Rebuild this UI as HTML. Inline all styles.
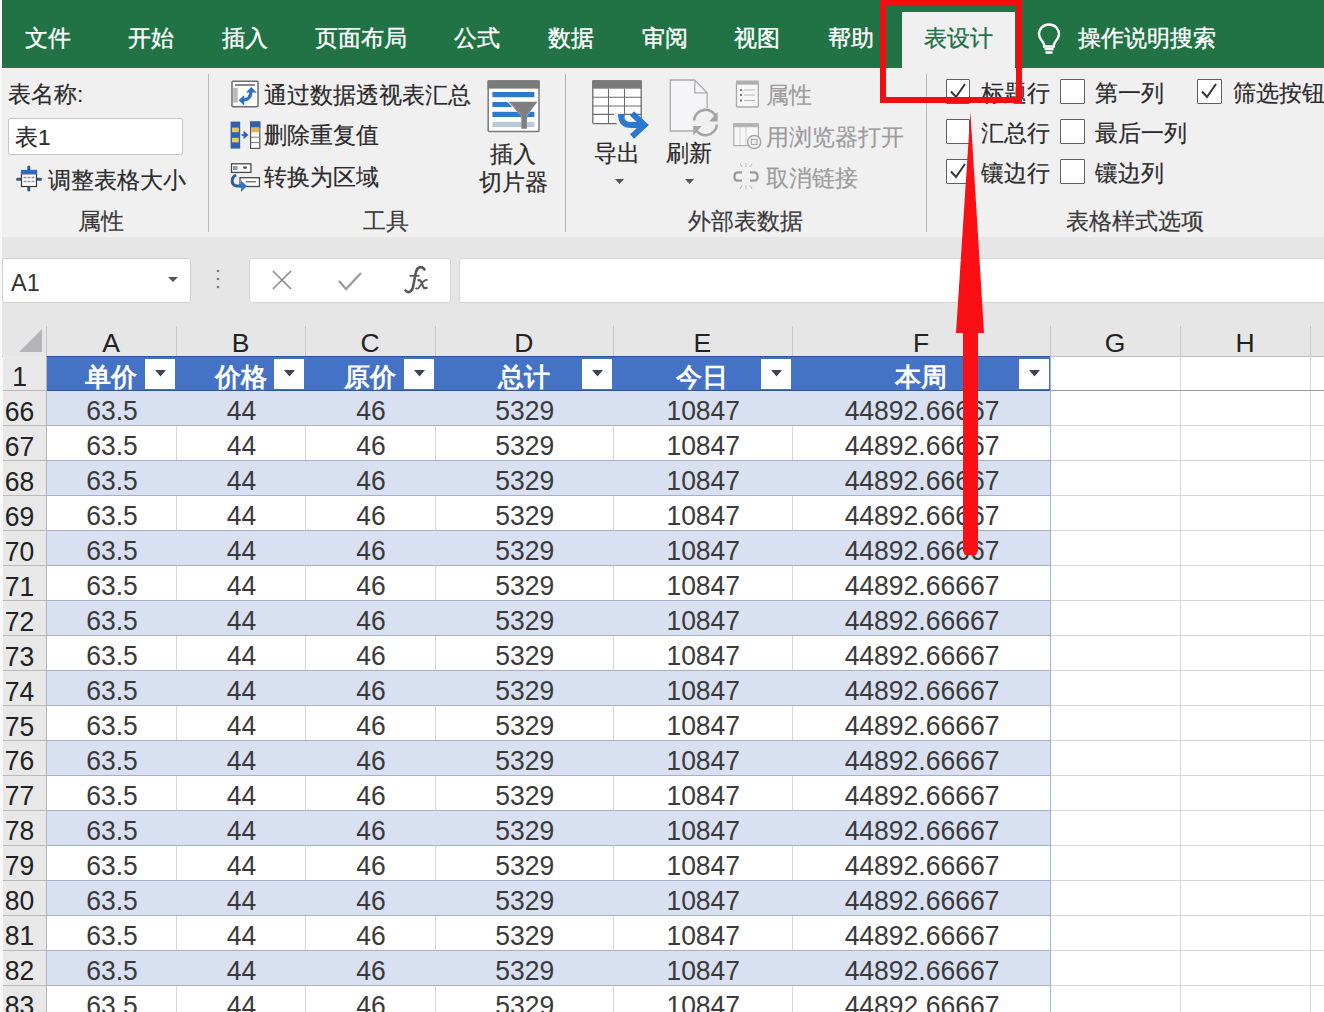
<!DOCTYPE html><html><head><meta charset="utf-8"><style>
*{box-sizing:border-box}
body{margin:0;width:1324px;height:1012px;overflow:hidden;position:relative;background:#fff;font-family:"Liberation Sans",sans-serif;color:#262626}
.a{position:absolute;white-space:nowrap;line-height:1}
.tab{position:absolute;top:27px;font-size:23px;line-height:23px;color:#fff;text-align:center;width:120px;-webkit-text-stroke:0.35px #fff}
.rt{position:absolute;font-size:22.5px;line-height:22px;white-space:nowrap;color:#2b2b2b;margin-top:1px;-webkit-text-stroke:0.2px}
.gl{position:absolute;top:210px;font-size:22.5px;line-height:22px;text-align:center;width:200px;color:#3a3a3a;margin-top:1px;-webkit-text-stroke:0.2px}
.dis{color:#9c9c9c}
.cb{position:absolute;width:24.5px;height:24.5px;border:1.4px solid #606060;border-radius:1px;background:#fff}
.ch{position:absolute;top:0;font-size:26.5px;line-height:30px;text-align:center;color:#222}
.rn{position:absolute;left:2px;width:44px;font-size:26.5px;text-align:center;padding-right:9px;color:#222;background:#e9e9e9;border-bottom:1px solid #c8c8c8}
.sy{display:inline-block;transform:scaleY(1.07);transform-origin:50% 25.5px}
.c{position:absolute;font-size:26.5px;text-align:center;color:#3a3a3a}
</style></head><body>

<div class="a" style="left:0;top:0;width:3px;height:1012px;background:#f9f9f9"></div>
<div class="a" style="left:2px;top:0;width:1322px;height:67.5px;background:#217346"></div>
<div class="a" style="left:902px;top:12px;width:113px;height:56px;background:#f1f0f1"></div>
<div class="tab" style="left:-12px">文件</div>
<div class="tab" style="left:91px">开始</div>
<div class="tab" style="left:185px">插入</div>
<div class="tab" style="left:301px">页面布局</div>
<div class="tab" style="left:417px">公式</div>
<div class="tab" style="left:510.5px">数据</div>
<div class="tab" style="left:604.5px">审阅</div>
<div class="tab" style="left:697px">视图</div>
<div class="tab" style="left:791px">帮助</div>
<div class="tab" style="left:898px;color:#217346;-webkit-text-stroke:0.3px #217346">表设计</div>
<svg class="a" style="left:1036px;top:22px" width="26" height="34" viewBox="0 0 26 34"><path d="M13 2.5C7 2.5 3 7 3 12c0 4 2.5 6.2 4 8.3 1 1.4 1.2 2.6 1.2 4.2h9.6c0-1.6.2-2.8 1.2-4.2 1.5-2.1 4-4.3 4-8.3 0-5-4-9.5-10-9.5z" fill="none" stroke="#fff" stroke-width="2.4"/><path d="M8.5 27h9M9.5 30.5h7" stroke="#fff" stroke-width="2.6"/></svg>
<div class="tab" style="left:1078px;width:auto;text-align:left">操作说明搜索</div>
<div class="a" style="left:2px;top:67.5px;width:1322px;height:169.5px;background:#f1f0f1"></div>
<div class="a" style="left:2px;top:237px;width:1322px;height:89px;background:#e6e6e6"></div>
<div class="a" style="left:208px;top:74px;width:1px;height:158px;background:#b8b8b8"></div>
<div class="a" style="left:565px;top:74px;width:1px;height:158px;background:#b8b8b8"></div>
<div class="a" style="left:926px;top:74px;width:1px;height:158px;background:#b8b8b8"></div>
<div class="rt" style="left:8px;top:83px">表名称:</div>
<div class="a" style="left:8px;top:118px;width:175px;height:37px;background:#fff;border:1px solid #c6c6c6;border-radius:2px"></div>
<div class="rt" style="left:15px;top:126px">表1</div>
<div class="rt" style="left:48px;top:169px">调整表格大小</div>
<div class="gl" style="left:1px">属性</div>
<div class="gl" style="left:286px">工具</div>
<div class="gl" style="left:645px">外部表数据</div>
<div class="gl" style="left:1035px">表格样式选项</div>
<div class="rt" style="left:264px;top:84px">通过数据透视表汇总</div>
<div class="rt" style="left:264px;top:124px">删除重复值</div>
<div class="rt" style="left:264px;top:166px">转换为区域</div>
<div class="rt" style="left:463px;top:143px;width:100px;text-align:center">插入</div>
<div class="rt" style="left:463px;top:171px;width:100px;text-align:center">切片器</div>
<div class="rt" style="left:567px;top:142px;width:100px;text-align:center">导出</div>
<div class="rt" style="left:639px;top:142px;width:100px;text-align:center">刷新</div>
<div class="rt dis" style="left:766px;top:84px">属性</div>
<div class="rt dis" style="left:766px;top:126px">用浏览器打开</div>
<div class="rt dis" style="left:766px;top:167px">取消链接</div>
<div class="cb" style="left:945.5px;top:79px"></div>
<svg class="a" style="left:945.5px;top:79px" width="24" height="24"><path d="M5 12.5l5 5.5 9-13" fill="none" stroke="#333" stroke-width="2"/></svg>
<div class="rt" style="left:980.6px;top:81.5px">标题行</div>
<div class="cb" style="left:1060px;top:79px"></div>
<div class="rt" style="left:1095px;top:81.5px">第一列</div>
<div class="cb" style="left:1197px;top:79px"></div>
<svg class="a" style="left:1197px;top:79px" width="24" height="24"><path d="M5 12.5l5 5.5 9-13" fill="none" stroke="#333" stroke-width="2"/></svg>
<div class="rt" style="left:1233px;top:81.5px">筛选按钮</div>
<div class="cb" style="left:945.5px;top:119px"></div>
<div class="rt" style="left:980.6px;top:121.5px">汇总行</div>
<div class="cb" style="left:1060px;top:119px"></div>
<div class="rt" style="left:1095px;top:121.5px">最后一列</div>
<div class="cb" style="left:945.5px;top:159px"></div>
<svg class="a" style="left:945.5px;top:159px" width="24" height="24"><path d="M5 12.5l5 5.5 9-13" fill="none" stroke="#333" stroke-width="2"/></svg>
<div class="rt" style="left:980.6px;top:161.5px">镶边行</div>
<div class="cb" style="left:1060px;top:159px"></div>
<div class="rt" style="left:1095px;top:161.5px">镶边列</div>
<svg class="a" style="left:14px;top:164px" width="30" height="30" viewBox="14 164 30 30">
<path d="M28.8 167v2.5M28.8 187.5v2.5M17.5 179.2h3M37.5 179.2h3" stroke="#2a5d8f" stroke-width="3" stroke-linecap="round"/>
<rect x="21.5" y="170.5" width="15" height="16" fill="#fff" stroke="#333" stroke-width="1.2"/>
<rect x="21" y="170" width="16" height="4.5" fill="#2d6cc0"/>
<path d="M23.5 177.5h3M27.5 177.5h3M31.5 177.5h3M23.5 181.5h3M27.5 181.5h3M31.5 181.5h3" stroke="#9a8a90" stroke-width="1.3"/>
</svg>
<svg class="a" style="left:229px;top:78px" width="32" height="32" viewBox="229 78 32 32">
<rect x="232" y="81.2" width="26" height="25.6" rx="1" fill="#fff" stroke="#6c6c6c" stroke-width="1.5"/>
<rect x="233.2" y="87.8" width="4.5" height="14.8" fill="#b9b9b9"/>
<path d="M235 85h20" stroke="#555" stroke-width="1.4"/>
<path d="M242.5 100c6.5 0 8.5-3.5 8.5-9" fill="none" stroke="#2f6fc6" stroke-width="3.2"/>
<path d="M251.3 87l-5.3 5.5h10.6z" fill="#2f6fc6"/>
<path d="M238.5 100.2l5.8-5.3v10.6z" fill="#2f6fc6"/>
</svg>
<svg class="a" style="left:229px;top:120px" width="33" height="31" viewBox="229 120 33 31">
<rect x="230.6" y="121.6" width="9.6" height="27" fill="#2c62ae"/>
<rect x="232" y="127.6" width="6.8" height="4.6" fill="#e9c85a"/>
<rect x="232" y="137.8" width="6.8" height="4.6" fill="#e9c85a"/>
<path d="M241.5 135h3" stroke="#2c62ae" stroke-width="1.6"/><path d="M243.5 130.8l5 4.2-5 4.2z" fill="#2c62ae"/>
<rect x="250.6" y="122" width="9.2" height="26.4" fill="#fff" stroke="#555" stroke-width="1.2"/>
<rect x="250" y="121.6" width="10.2" height="6" fill="#2c62ae"/>
<rect x="251.2" y="127.6" width="8" height="4.8" fill="#e2b45a"/>
<path d="M251 137.2h9M251 142.6h9" stroke="#777" stroke-width="1"/>
</svg>
<svg class="a" style="left:229px;top:161px" width="33" height="33" viewBox="229 161 33 33">
<rect x="231.5" y="163.8" width="19.4" height="8.6" fill="#fff" stroke="#4a4a4a" stroke-width="1.3"/>
<rect x="233" y="166" width="4.5" height="4" fill="#8a9ab0"/>
<ellipse cx="245" cy="167.6" rx="2" ry="1.4" fill="#555"/>
<rect x="240" y="177.7" width="19.4" height="8.8" fill="#fff" stroke="#4a4a4a" stroke-width="1.3"/>
<path d="M246 181.8h10" stroke="#666" stroke-width="1.3"/>
<path d="M236 175c-4.5 2-6 10 1 11h5" fill="none" stroke="#2a5d9f" stroke-width="3"/>
<path d="M241 180.5l6 5.5-6 6z" fill="#2e78d2"/>
</svg>
<svg class="a" style="left:485px;top:78px" width="58" height="57" viewBox="485 78 58 57">
<rect x="488.2" y="81" width="50.8" height="50.4" rx="1" fill="#fff" stroke="#7a7a7a" stroke-width="1.5"/>
<rect x="487.5" y="80.3" width="52.2" height="8.3" fill="#7a7a7a"/>
<rect x="492.4" y="92" width="42" height="5.2" fill="#2e79d0"/>
<rect x="492.4" y="102" width="20" height="5" fill="#2e79d0"/>
<rect x="492.4" y="111.8" width="42" height="5.2" fill="#2e79d0"/>
<rect x="492.4" y="122" width="42" height="5.1" fill="#b9c9db"/>
<path d="M506.5 101.2h31.5l-11 14.5v13.5h-5.6v-13.5z" fill="#fff"/>
<path d="M508.5 101.7h29l-10.6 13.8v13.2h-5.6v-13.2z" fill="#7f7f7f"/>
<path d="M511 103l10.5 13" stroke="#b08080" stroke-width="1.2"/>
</svg>
<svg class="a" style="left:590px;top:78px" width="60" height="62" viewBox="590 78 60 62">
<rect x="592.8" y="81" width="48.4" height="42.6" rx="1" fill="#fff" stroke="#6c6c6c" stroke-width="1.3"/>
<rect x="592.2" y="80.2" width="49.6" height="8.5" fill="#7a7a7a"/>
<path d="M608.5 88.7v35M624.5 88.7v35M592.5 97.2h49M592.5 106h49M592.5 114.4h49" stroke="#6c6c6c" stroke-width="1.1"/>
<path d="M619 112.5c0 9 4 13 12 13h8" fill="none" stroke="#f1f0f1" stroke-width="10"/>
<path d="M621 114c0 8 3.5 11 10.5 11h9" fill="none" stroke="#2b78d0" stroke-width="6"/>
<path d="M632 113.5l12.5 11.5-12.5 11.5" fill="none" stroke="#2b78d0" stroke-width="6"/>
</svg>
<svg class="a" style="left:666px;top:76px" width="56" height="62" viewBox="666 76 56 62">
<path d="M670.3 80h24.5l12.3 13v38h-36.8z" fill="#f5f5f7" stroke="#ababab" stroke-width="1.3"/>
<path d="M694.8 80v12.8h12.3" fill="none" stroke="#ababab" stroke-width="1.3"/>
<circle cx="705.5" cy="122.5" r="14.5" fill="#f1f0f1"/>
<path d="M694 120.5a11.5 11.5 0 0 1 22.5 -2.5" fill="none" stroke="#a5a5a5" stroke-width="2.6"/>
<path d="M717 124.5a11.5 11.5 0 0 1 -22.5 2.5" fill="none" stroke="#a5a5a5" stroke-width="2.6"/>
<path d="M717.6 112v9.5h-8.5z" fill="#a5a5a5"/>
<path d="M693.3 135.5v-9.5h8.5z" fill="#a5a5a5"/>
</svg>
<svg class="a" style="left:734px;top:79px" width="27" height="31" viewBox="734 79 27 31">
<rect x="736.5" y="81.4" width="21.8" height="25.6" rx="1" fill="#f7f7f7" stroke="#aaaaaa" stroke-width="1.3"/>
<rect x="736" y="80.7" width="23" height="4" fill="#b0b0b0"/>
<path d="M740 90h2M740 95h2M740 100.5h2" stroke="#777" stroke-width="1.8"/>
<path d="M744 90h11M744 95h11M744 100.5h11" stroke="#b5b5b5" stroke-width="1"/>
</svg>
<svg class="a" style="left:732px;top:121px" width="32" height="31" viewBox="732 121 32 31">
<rect x="733.8" y="123.8" width="24.6" height="21.8" fill="#f7f7f7" stroke="#b0b0b0" stroke-width="1.2"/>
<rect x="733.2" y="123.2" width="25.7" height="4" fill="#b4b4b4"/>
<path d="M740 127v18M746 127v18" stroke="#d0d0d0" stroke-width="1"/>
<circle cx="754.2" cy="142" r="6.6" fill="#f1f0f1" stroke="#a8a8a8" stroke-width="1.5"/>
<rect x="751.4" y="139.4" width="5.6" height="5" fill="none" stroke="#a8a8a8" stroke-width="1.1"/>
</svg>
<svg class="a" style="left:732px;top:162px" width="29" height="28" viewBox="732 162 29 28">
<path d="M742 172.3h-4c-2.6 0-3.6 2-3.6 4.2s1 4.2 3.6 4.2h4" fill="none" stroke="#9a9a9a" stroke-width="2.2"/>
<path d="M750 172.3h4c2.6 0 3.6 2 3.6 4.2s-1 4.2-3.6 4.2h-4" fill="none" stroke="#9a9a9a" stroke-width="2.2"/>
<path d="M740 163.5l2 3.5M746 163v4M752 163.5l-2 3.5M740 189l2-3.5M746 189.5v-4M752 189l-2-3.5" stroke="#b8b8b8" stroke-width="1"/>
</svg>
<svg class="a" style="left:615px;top:179px" width="10" height="6"><path d="M0 0h9L4.5 5z" fill="#555"/></svg>
<svg class="a" style="left:685px;top:179px" width="10" height="6"><path d="M0 0h9L4.5 5z" fill="#555"/></svg>
<div class="a" style="left:2px;top:258px;width:189px;height:45px;background:#fff;border:1px solid #cfcfcf;border-radius:3px"></div>
<div class="a" style="left:11px;top:271.5px;font-size:23.5px;color:#333">A1</div>
<svg class="a" style="left:168px;top:277px" width="10" height="6"><path d="M0 0h10L5 5z" fill="#555"/></svg>
<svg class="a" style="left:216px;top:268px" width="4" height="24"><circle cx="2" cy="3" r="1.3" fill="#777"/><circle cx="2" cy="11" r="1.3" fill="#777"/><circle cx="2" cy="19" r="1.3" fill="#777"/></svg>
<div class="a" style="left:249px;top:258px;width:202px;height:45px;background:#fff;border:1px solid #d6d6d6;border-radius:3px"></div>
<svg class="a" style="left:270px;top:269px" width="24" height="22"><path d="M3 2l18 18M21 2L3 20" stroke="#8a8a8a" stroke-width="1.6"/></svg>
<svg class="a" style="left:337px;top:270px" width="26" height="22"><path d="M2 11l7 8L24 3" fill="none" stroke="#9a9a9a" stroke-width="2.2"/></svg>
<svg class="a" style="left:400px;top:262px" width="32" height="36" viewBox="400 262 32 36"><path d="M424.5 269.5C422 265.5 417 266.5 415.8 272.5L413 287C412 292 408 293.5 405.5 290.5" fill="none" stroke="#585858" stroke-width="2.6" stroke-linecap="round"/><path d="M409.5 275.8H419.5" stroke="#585858" stroke-width="1.8"/><path d="M417.5 280.5C420.5 279 421.5 282 422.5 285C423.5 288 424.5 289 427.5 287.5" fill="none" stroke="#585858" stroke-width="2.2"/><path d="M427.5 280C425 279.5 423.5 281 421.5 284L419 287.5C418 288.8 416.5 288.8 415.5 288" fill="none" stroke="#585858" stroke-width="1.8"/></svg>
<div class="a" style="left:459px;top:258px;width:870px;height:45px;background:#fff;border:1px solid #d6d6d6;border-radius:3px"></div>
<div class="a" style="left:2px;top:326px;width:1322px;height:31px;background:#e6e6e6;border-bottom:1px solid #bdbdbd"></div>
<svg class="a" style="left:16px;top:327px" width="28" height="27"><path d="M26 2V25H3z" fill="#b5b5b7"/></svg>
<div class="a" style="left:46px;top:326px;width:1px;height:30px;background:#c8c8c8"></div>
<div class="ch" style="left:46px;top:328px;width:130px">A</div>
<div class="a" style="left:176px;top:326px;width:1px;height:30px;background:#c8c8c8"></div>
<div class="ch" style="left:176px;top:328px;width:129px">B</div>
<div class="a" style="left:305px;top:326px;width:1px;height:30px;background:#c8c8c8"></div>
<div class="ch" style="left:305px;top:328px;width:130px">C</div>
<div class="a" style="left:435px;top:326px;width:1px;height:30px;background:#c8c8c8"></div>
<div class="ch" style="left:435px;top:328px;width:177.5px">D</div>
<div class="a" style="left:612.5px;top:326px;width:1px;height:30px;background:#c8c8c8"></div>
<div class="ch" style="left:612.5px;top:328px;width:179.5px">E</div>
<div class="a" style="left:792px;top:326px;width:1px;height:30px;background:#c8c8c8"></div>
<div class="ch" style="left:792px;top:328px;width:258px">F</div>
<div class="a" style="left:1050px;top:326px;width:1px;height:30px;background:#c8c8c8"></div>
<div class="ch" style="left:1050px;top:328px;width:130px">G</div>
<div class="a" style="left:1180px;top:326px;width:1px;height:30px;background:#c8c8c8"></div>
<div class="ch" style="left:1180px;top:328px;width:130px">H</div>
<div class="a" style="left:1310px;top:326px;width:1px;height:30px;background:#c8c8c8"></div>
<div class="a" style="left:3px;top:356px;width:43px;height:660px;background:#e8e8e8"></div>
<div class="a" style="left:46px;top:356px;width:1004px;height:35px;background:#4472c4;border-top:1px solid #2f5597;border-bottom:1px solid #2f5597"></div>
<div class="a" style="left:46px;top:390.95px;width:1004px;height:34.95px;background:#d9e0f1"></div>
<div class="a" style="left:46px;top:425.90px;width:1004px;height:34.95px;background:#fff"></div>
<div class="a" style="left:46px;top:460.85px;width:1004px;height:34.95px;background:#d9e0f1"></div>
<div class="a" style="left:46px;top:495.80px;width:1004px;height:34.95px;background:#fff"></div>
<div class="a" style="left:46px;top:530.75px;width:1004px;height:34.95px;background:#d9e0f1"></div>
<div class="a" style="left:46px;top:565.70px;width:1004px;height:34.95px;background:#fff"></div>
<div class="a" style="left:46px;top:600.65px;width:1004px;height:34.95px;background:#d9e0f1"></div>
<div class="a" style="left:46px;top:635.60px;width:1004px;height:34.95px;background:#fff"></div>
<div class="a" style="left:46px;top:670.55px;width:1004px;height:34.95px;background:#d9e0f1"></div>
<div class="a" style="left:46px;top:705.50px;width:1004px;height:34.95px;background:#fff"></div>
<div class="a" style="left:46px;top:740.45px;width:1004px;height:34.95px;background:#d9e0f1"></div>
<div class="a" style="left:46px;top:775.40px;width:1004px;height:34.95px;background:#fff"></div>
<div class="a" style="left:46px;top:810.35px;width:1004px;height:34.95px;background:#d9e0f1"></div>
<div class="a" style="left:46px;top:845.30px;width:1004px;height:34.95px;background:#fff"></div>
<div class="a" style="left:46px;top:880.25px;width:1004px;height:34.95px;background:#d9e0f1"></div>
<div class="a" style="left:46px;top:915.20px;width:1004px;height:34.95px;background:#fff"></div>
<div class="a" style="left:46px;top:950.15px;width:1004px;height:34.95px;background:#d9e0f1"></div>
<div class="a" style="left:46px;top:985.10px;width:1004px;height:34.95px;background:#fff"></div>
<div class="a" style="left:176px;top:425.90px;width:1px;height:34.95px;background:#d6d6d6"></div>
<div class="a" style="left:305px;top:425.90px;width:1px;height:34.95px;background:#d6d6d6"></div>
<div class="a" style="left:435px;top:425.90px;width:1px;height:34.95px;background:#d6d6d6"></div>
<div class="a" style="left:612.5px;top:425.90px;width:1px;height:34.95px;background:#d6d6d6"></div>
<div class="a" style="left:792px;top:425.90px;width:1px;height:34.95px;background:#d6d6d6"></div>
<div class="a" style="left:176px;top:495.80px;width:1px;height:34.95px;background:#d6d6d6"></div>
<div class="a" style="left:305px;top:495.80px;width:1px;height:34.95px;background:#d6d6d6"></div>
<div class="a" style="left:435px;top:495.80px;width:1px;height:34.95px;background:#d6d6d6"></div>
<div class="a" style="left:612.5px;top:495.80px;width:1px;height:34.95px;background:#d6d6d6"></div>
<div class="a" style="left:792px;top:495.80px;width:1px;height:34.95px;background:#d6d6d6"></div>
<div class="a" style="left:176px;top:565.70px;width:1px;height:34.95px;background:#d6d6d6"></div>
<div class="a" style="left:305px;top:565.70px;width:1px;height:34.95px;background:#d6d6d6"></div>
<div class="a" style="left:435px;top:565.70px;width:1px;height:34.95px;background:#d6d6d6"></div>
<div class="a" style="left:612.5px;top:565.70px;width:1px;height:34.95px;background:#d6d6d6"></div>
<div class="a" style="left:792px;top:565.70px;width:1px;height:34.95px;background:#d6d6d6"></div>
<div class="a" style="left:176px;top:635.60px;width:1px;height:34.95px;background:#d6d6d6"></div>
<div class="a" style="left:305px;top:635.60px;width:1px;height:34.95px;background:#d6d6d6"></div>
<div class="a" style="left:435px;top:635.60px;width:1px;height:34.95px;background:#d6d6d6"></div>
<div class="a" style="left:612.5px;top:635.60px;width:1px;height:34.95px;background:#d6d6d6"></div>
<div class="a" style="left:792px;top:635.60px;width:1px;height:34.95px;background:#d6d6d6"></div>
<div class="a" style="left:176px;top:705.50px;width:1px;height:34.95px;background:#d6d6d6"></div>
<div class="a" style="left:305px;top:705.50px;width:1px;height:34.95px;background:#d6d6d6"></div>
<div class="a" style="left:435px;top:705.50px;width:1px;height:34.95px;background:#d6d6d6"></div>
<div class="a" style="left:612.5px;top:705.50px;width:1px;height:34.95px;background:#d6d6d6"></div>
<div class="a" style="left:792px;top:705.50px;width:1px;height:34.95px;background:#d6d6d6"></div>
<div class="a" style="left:176px;top:775.40px;width:1px;height:34.95px;background:#d6d6d6"></div>
<div class="a" style="left:305px;top:775.40px;width:1px;height:34.95px;background:#d6d6d6"></div>
<div class="a" style="left:435px;top:775.40px;width:1px;height:34.95px;background:#d6d6d6"></div>
<div class="a" style="left:612.5px;top:775.40px;width:1px;height:34.95px;background:#d6d6d6"></div>
<div class="a" style="left:792px;top:775.40px;width:1px;height:34.95px;background:#d6d6d6"></div>
<div class="a" style="left:176px;top:845.30px;width:1px;height:34.95px;background:#d6d6d6"></div>
<div class="a" style="left:305px;top:845.30px;width:1px;height:34.95px;background:#d6d6d6"></div>
<div class="a" style="left:435px;top:845.30px;width:1px;height:34.95px;background:#d6d6d6"></div>
<div class="a" style="left:612.5px;top:845.30px;width:1px;height:34.95px;background:#d6d6d6"></div>
<div class="a" style="left:792px;top:845.30px;width:1px;height:34.95px;background:#d6d6d6"></div>
<div class="a" style="left:176px;top:915.20px;width:1px;height:34.95px;background:#d6d6d6"></div>
<div class="a" style="left:305px;top:915.20px;width:1px;height:34.95px;background:#d6d6d6"></div>
<div class="a" style="left:435px;top:915.20px;width:1px;height:34.95px;background:#d6d6d6"></div>
<div class="a" style="left:612.5px;top:915.20px;width:1px;height:34.95px;background:#d6d6d6"></div>
<div class="a" style="left:792px;top:915.20px;width:1px;height:34.95px;background:#d6d6d6"></div>
<div class="a" style="left:176px;top:985.10px;width:1px;height:34.95px;background:#d6d6d6"></div>
<div class="a" style="left:305px;top:985.10px;width:1px;height:34.95px;background:#d6d6d6"></div>
<div class="a" style="left:435px;top:985.10px;width:1px;height:34.95px;background:#d6d6d6"></div>
<div class="a" style="left:612.5px;top:985.10px;width:1px;height:34.95px;background:#d6d6d6"></div>
<div class="a" style="left:792px;top:985.10px;width:1px;height:34.95px;background:#d6d6d6"></div>
<div class="a" style="left:1180px;top:356px;width:1px;height:660px;background:#d6d6d6"></div>
<div class="a" style="left:1310px;top:356px;width:1px;height:660px;background:#d6d6d6"></div>
<div class="a" style="left:1050px;top:390.45px;width:274px;height:1px;background:#9a9a9a"></div>
<div class="a" style="left:3px;top:390.45px;width:43px;height:1px;background:#b9b9b9"></div>
<div class="a" style="left:46px;top:425.30px;width:1004px;height:1.2px;background:#a3b0c8"></div>
<div class="a" style="left:1050px;top:425.40px;width:274px;height:1px;background:#d6d6d6"></div>
<div class="a" style="left:3px;top:425.40px;width:43px;height:1px;background:#b9b9b9"></div>
<div class="a" style="left:46px;top:460.25px;width:1004px;height:1.2px;background:#a3b0c8"></div>
<div class="a" style="left:1050px;top:460.35px;width:274px;height:1px;background:#d6d6d6"></div>
<div class="a" style="left:3px;top:460.35px;width:43px;height:1px;background:#b9b9b9"></div>
<div class="a" style="left:46px;top:495.20px;width:1004px;height:1.2px;background:#a3b0c8"></div>
<div class="a" style="left:1050px;top:495.30px;width:274px;height:1px;background:#d6d6d6"></div>
<div class="a" style="left:3px;top:495.30px;width:43px;height:1px;background:#b9b9b9"></div>
<div class="a" style="left:46px;top:530.15px;width:1004px;height:1.2px;background:#a3b0c8"></div>
<div class="a" style="left:1050px;top:530.25px;width:274px;height:1px;background:#d6d6d6"></div>
<div class="a" style="left:3px;top:530.25px;width:43px;height:1px;background:#b9b9b9"></div>
<div class="a" style="left:46px;top:565.10px;width:1004px;height:1.2px;background:#a3b0c8"></div>
<div class="a" style="left:1050px;top:565.20px;width:274px;height:1px;background:#d6d6d6"></div>
<div class="a" style="left:3px;top:565.20px;width:43px;height:1px;background:#b9b9b9"></div>
<div class="a" style="left:46px;top:600.05px;width:1004px;height:1.2px;background:#a3b0c8"></div>
<div class="a" style="left:1050px;top:600.15px;width:274px;height:1px;background:#d6d6d6"></div>
<div class="a" style="left:3px;top:600.15px;width:43px;height:1px;background:#b9b9b9"></div>
<div class="a" style="left:46px;top:635.00px;width:1004px;height:1.2px;background:#a3b0c8"></div>
<div class="a" style="left:1050px;top:635.10px;width:274px;height:1px;background:#d6d6d6"></div>
<div class="a" style="left:3px;top:635.10px;width:43px;height:1px;background:#b9b9b9"></div>
<div class="a" style="left:46px;top:669.95px;width:1004px;height:1.2px;background:#a3b0c8"></div>
<div class="a" style="left:1050px;top:670.05px;width:274px;height:1px;background:#d6d6d6"></div>
<div class="a" style="left:3px;top:670.05px;width:43px;height:1px;background:#b9b9b9"></div>
<div class="a" style="left:46px;top:704.90px;width:1004px;height:1.2px;background:#a3b0c8"></div>
<div class="a" style="left:1050px;top:705.00px;width:274px;height:1px;background:#d6d6d6"></div>
<div class="a" style="left:3px;top:705.00px;width:43px;height:1px;background:#b9b9b9"></div>
<div class="a" style="left:46px;top:739.85px;width:1004px;height:1.2px;background:#a3b0c8"></div>
<div class="a" style="left:1050px;top:739.95px;width:274px;height:1px;background:#d6d6d6"></div>
<div class="a" style="left:3px;top:739.95px;width:43px;height:1px;background:#b9b9b9"></div>
<div class="a" style="left:46px;top:774.80px;width:1004px;height:1.2px;background:#a3b0c8"></div>
<div class="a" style="left:1050px;top:774.90px;width:274px;height:1px;background:#d6d6d6"></div>
<div class="a" style="left:3px;top:774.90px;width:43px;height:1px;background:#b9b9b9"></div>
<div class="a" style="left:46px;top:809.75px;width:1004px;height:1.2px;background:#a3b0c8"></div>
<div class="a" style="left:1050px;top:809.85px;width:274px;height:1px;background:#d6d6d6"></div>
<div class="a" style="left:3px;top:809.85px;width:43px;height:1px;background:#b9b9b9"></div>
<div class="a" style="left:46px;top:844.70px;width:1004px;height:1.2px;background:#a3b0c8"></div>
<div class="a" style="left:1050px;top:844.80px;width:274px;height:1px;background:#d6d6d6"></div>
<div class="a" style="left:3px;top:844.80px;width:43px;height:1px;background:#b9b9b9"></div>
<div class="a" style="left:46px;top:879.65px;width:1004px;height:1.2px;background:#a3b0c8"></div>
<div class="a" style="left:1050px;top:879.75px;width:274px;height:1px;background:#d6d6d6"></div>
<div class="a" style="left:3px;top:879.75px;width:43px;height:1px;background:#b9b9b9"></div>
<div class="a" style="left:46px;top:914.60px;width:1004px;height:1.2px;background:#a3b0c8"></div>
<div class="a" style="left:1050px;top:914.70px;width:274px;height:1px;background:#d6d6d6"></div>
<div class="a" style="left:3px;top:914.70px;width:43px;height:1px;background:#b9b9b9"></div>
<div class="a" style="left:46px;top:949.55px;width:1004px;height:1.2px;background:#a3b0c8"></div>
<div class="a" style="left:1050px;top:949.65px;width:274px;height:1px;background:#d6d6d6"></div>
<div class="a" style="left:3px;top:949.65px;width:43px;height:1px;background:#b9b9b9"></div>
<div class="a" style="left:46px;top:984.50px;width:1004px;height:1.2px;background:#a3b0c8"></div>
<div class="a" style="left:1050px;top:984.60px;width:274px;height:1px;background:#d6d6d6"></div>
<div class="a" style="left:3px;top:984.60px;width:43px;height:1px;background:#b9b9b9"></div>
<div class="a" style="left:46px;top:1019.45px;width:1004px;height:1.2px;background:#a3b0c8"></div>
<div class="a" style="left:1050px;top:1019.55px;width:274px;height:1px;background:#d6d6d6"></div>
<div class="a" style="left:3px;top:1019.55px;width:43px;height:1px;background:#b9b9b9"></div>
<div class="a" style="left:45.5px;top:356px;width:1px;height:660px;background:#b4b4b4"></div>
<div class="a" style="left:1049.5px;top:356px;width:1px;height:660px;background:#9fb3dc"></div>
<div class="a" style="left:0;top:360.00px;width:39px;text-align:center;font-size:26.5px;line-height:34.95px;color:#222"><span class="sy">1</span></div>
<div class="a" style="left:0;top:394.95px;width:39px;text-align:center;font-size:26.5px;line-height:34.95px;color:#222"><span class="sy">66</span></div>
<div class="a" style="left:0;top:429.90px;width:39px;text-align:center;font-size:26.5px;line-height:34.95px;color:#222"><span class="sy">67</span></div>
<div class="a" style="left:0;top:464.85px;width:39px;text-align:center;font-size:26.5px;line-height:34.95px;color:#222"><span class="sy">68</span></div>
<div class="a" style="left:0;top:499.80px;width:39px;text-align:center;font-size:26.5px;line-height:34.95px;color:#222"><span class="sy">69</span></div>
<div class="a" style="left:0;top:534.75px;width:39px;text-align:center;font-size:26.5px;line-height:34.95px;color:#222"><span class="sy">70</span></div>
<div class="a" style="left:0;top:569.70px;width:39px;text-align:center;font-size:26.5px;line-height:34.95px;color:#222"><span class="sy">71</span></div>
<div class="a" style="left:0;top:604.65px;width:39px;text-align:center;font-size:26.5px;line-height:34.95px;color:#222"><span class="sy">72</span></div>
<div class="a" style="left:0;top:639.60px;width:39px;text-align:center;font-size:26.5px;line-height:34.95px;color:#222"><span class="sy">73</span></div>
<div class="a" style="left:0;top:674.55px;width:39px;text-align:center;font-size:26.5px;line-height:34.95px;color:#222"><span class="sy">74</span></div>
<div class="a" style="left:0;top:709.50px;width:39px;text-align:center;font-size:26.5px;line-height:34.95px;color:#222"><span class="sy">75</span></div>
<div class="a" style="left:0;top:744.45px;width:39px;text-align:center;font-size:26.5px;line-height:34.95px;color:#222"><span class="sy">76</span></div>
<div class="a" style="left:0;top:779.40px;width:39px;text-align:center;font-size:26.5px;line-height:34.95px;color:#222"><span class="sy">77</span></div>
<div class="a" style="left:0;top:814.35px;width:39px;text-align:center;font-size:26.5px;line-height:34.95px;color:#222"><span class="sy">78</span></div>
<div class="a" style="left:0;top:849.30px;width:39px;text-align:center;font-size:26.5px;line-height:34.95px;color:#222"><span class="sy">79</span></div>
<div class="a" style="left:0;top:884.25px;width:39px;text-align:center;font-size:26.5px;line-height:34.95px;color:#222"><span class="sy">80</span></div>
<div class="a" style="left:0;top:919.20px;width:39px;text-align:center;font-size:26.5px;line-height:34.95px;color:#222"><span class="sy">81</span></div>
<div class="a" style="left:0;top:954.15px;width:39px;text-align:center;font-size:26.5px;line-height:34.95px;color:#222"><span class="sy">82</span></div>
<div class="a" style="left:0;top:989.10px;width:39px;text-align:center;font-size:26.5px;line-height:34.95px;color:#222"><span class="sy">83</span></div>
<div class="a" style="left:46px;top:364px;width:130px;text-align:center;color:#fff;font-weight:bold;font-size:26px;line-height:26px">单价</div>
<div class="a" style="left:145px;top:359px;width:30px;height:30px;background:#fff"></div>
<svg class="a" style="left:155px;top:370px" width="11" height="7"><path d="M0 0h11L5.5 6.5z" fill="#3c4352"/></svg>
<div class="a" style="left:176px;top:364px;width:129px;text-align:center;color:#fff;font-weight:bold;font-size:26px;line-height:26px">价格</div>
<div class="a" style="left:274px;top:359px;width:30px;height:30px;background:#fff"></div>
<svg class="a" style="left:284px;top:370px" width="11" height="7"><path d="M0 0h11L5.5 6.5z" fill="#3c4352"/></svg>
<div class="a" style="left:305px;top:364px;width:130px;text-align:center;color:#fff;font-weight:bold;font-size:26px;line-height:26px">原价</div>
<div class="a" style="left:404px;top:359px;width:30px;height:30px;background:#fff"></div>
<svg class="a" style="left:414px;top:370px" width="11" height="7"><path d="M0 0h11L5.5 6.5z" fill="#3c4352"/></svg>
<div class="a" style="left:435px;top:364px;width:177.5px;text-align:center;color:#fff;font-weight:bold;font-size:26px;line-height:26px">总计</div>
<div class="a" style="left:581.5px;top:359px;width:30px;height:30px;background:#fff"></div>
<svg class="a" style="left:591.5px;top:370px" width="11" height="7"><path d="M0 0h11L5.5 6.5z" fill="#3c4352"/></svg>
<div class="a" style="left:612.5px;top:364px;width:179.5px;text-align:center;color:#fff;font-weight:bold;font-size:26px;line-height:26px">今日</div>
<div class="a" style="left:761px;top:359px;width:30px;height:30px;background:#fff"></div>
<svg class="a" style="left:771px;top:370px" width="11" height="7"><path d="M0 0h11L5.5 6.5z" fill="#3c4352"/></svg>
<div class="a" style="left:792px;top:364px;width:258px;text-align:center;color:#fff;font-weight:bold;font-size:26px;line-height:26px">本周</div>
<div class="a" style="left:1019px;top:359px;width:30px;height:30px;background:#fff"></div>
<svg class="a" style="left:1029px;top:370px" width="11" height="7"><path d="M0 0h11L5.5 6.5z" fill="#3c4352"/></svg>
<div class="c" style="left:47px;top:394.45px;width:130px;line-height:34.95px"><span class="sy">63.5</span></div>
<div class="c" style="left:177px;top:394.45px;width:129px;line-height:34.95px"><span class="sy">44</span></div>
<div class="c" style="left:306px;top:394.45px;width:130px;line-height:34.95px"><span class="sy">46</span></div>
<div class="c" style="left:436px;top:394.45px;width:177.5px;line-height:34.95px"><span class="sy">5329</span></div>
<div class="c" style="left:613.5px;top:394.45px;width:179.5px;line-height:34.95px"><span class="sy">10847</span></div>
<div class="c" style="left:793px;top:394.45px;width:258px;line-height:34.95px"><span class="sy">44892.66667</span></div>
<div class="c" style="left:47px;top:429.40px;width:130px;line-height:34.95px"><span class="sy">63.5</span></div>
<div class="c" style="left:177px;top:429.40px;width:129px;line-height:34.95px"><span class="sy">44</span></div>
<div class="c" style="left:306px;top:429.40px;width:130px;line-height:34.95px"><span class="sy">46</span></div>
<div class="c" style="left:436px;top:429.40px;width:177.5px;line-height:34.95px"><span class="sy">5329</span></div>
<div class="c" style="left:613.5px;top:429.40px;width:179.5px;line-height:34.95px"><span class="sy">10847</span></div>
<div class="c" style="left:793px;top:429.40px;width:258px;line-height:34.95px"><span class="sy">44892.66667</span></div>
<div class="c" style="left:47px;top:464.35px;width:130px;line-height:34.95px"><span class="sy">63.5</span></div>
<div class="c" style="left:177px;top:464.35px;width:129px;line-height:34.95px"><span class="sy">44</span></div>
<div class="c" style="left:306px;top:464.35px;width:130px;line-height:34.95px"><span class="sy">46</span></div>
<div class="c" style="left:436px;top:464.35px;width:177.5px;line-height:34.95px"><span class="sy">5329</span></div>
<div class="c" style="left:613.5px;top:464.35px;width:179.5px;line-height:34.95px"><span class="sy">10847</span></div>
<div class="c" style="left:793px;top:464.35px;width:258px;line-height:34.95px"><span class="sy">44892.66667</span></div>
<div class="c" style="left:47px;top:499.30px;width:130px;line-height:34.95px"><span class="sy">63.5</span></div>
<div class="c" style="left:177px;top:499.30px;width:129px;line-height:34.95px"><span class="sy">44</span></div>
<div class="c" style="left:306px;top:499.30px;width:130px;line-height:34.95px"><span class="sy">46</span></div>
<div class="c" style="left:436px;top:499.30px;width:177.5px;line-height:34.95px"><span class="sy">5329</span></div>
<div class="c" style="left:613.5px;top:499.30px;width:179.5px;line-height:34.95px"><span class="sy">10847</span></div>
<div class="c" style="left:793px;top:499.30px;width:258px;line-height:34.95px"><span class="sy">44892.66667</span></div>
<div class="c" style="left:47px;top:534.25px;width:130px;line-height:34.95px"><span class="sy">63.5</span></div>
<div class="c" style="left:177px;top:534.25px;width:129px;line-height:34.95px"><span class="sy">44</span></div>
<div class="c" style="left:306px;top:534.25px;width:130px;line-height:34.95px"><span class="sy">46</span></div>
<div class="c" style="left:436px;top:534.25px;width:177.5px;line-height:34.95px"><span class="sy">5329</span></div>
<div class="c" style="left:613.5px;top:534.25px;width:179.5px;line-height:34.95px"><span class="sy">10847</span></div>
<div class="c" style="left:793px;top:534.25px;width:258px;line-height:34.95px"><span class="sy">44892.66667</span></div>
<div class="c" style="left:47px;top:569.20px;width:130px;line-height:34.95px"><span class="sy">63.5</span></div>
<div class="c" style="left:177px;top:569.20px;width:129px;line-height:34.95px"><span class="sy">44</span></div>
<div class="c" style="left:306px;top:569.20px;width:130px;line-height:34.95px"><span class="sy">46</span></div>
<div class="c" style="left:436px;top:569.20px;width:177.5px;line-height:34.95px"><span class="sy">5329</span></div>
<div class="c" style="left:613.5px;top:569.20px;width:179.5px;line-height:34.95px"><span class="sy">10847</span></div>
<div class="c" style="left:793px;top:569.20px;width:258px;line-height:34.95px"><span class="sy">44892.66667</span></div>
<div class="c" style="left:47px;top:604.15px;width:130px;line-height:34.95px"><span class="sy">63.5</span></div>
<div class="c" style="left:177px;top:604.15px;width:129px;line-height:34.95px"><span class="sy">44</span></div>
<div class="c" style="left:306px;top:604.15px;width:130px;line-height:34.95px"><span class="sy">46</span></div>
<div class="c" style="left:436px;top:604.15px;width:177.5px;line-height:34.95px"><span class="sy">5329</span></div>
<div class="c" style="left:613.5px;top:604.15px;width:179.5px;line-height:34.95px"><span class="sy">10847</span></div>
<div class="c" style="left:793px;top:604.15px;width:258px;line-height:34.95px"><span class="sy">44892.66667</span></div>
<div class="c" style="left:47px;top:639.10px;width:130px;line-height:34.95px"><span class="sy">63.5</span></div>
<div class="c" style="left:177px;top:639.10px;width:129px;line-height:34.95px"><span class="sy">44</span></div>
<div class="c" style="left:306px;top:639.10px;width:130px;line-height:34.95px"><span class="sy">46</span></div>
<div class="c" style="left:436px;top:639.10px;width:177.5px;line-height:34.95px"><span class="sy">5329</span></div>
<div class="c" style="left:613.5px;top:639.10px;width:179.5px;line-height:34.95px"><span class="sy">10847</span></div>
<div class="c" style="left:793px;top:639.10px;width:258px;line-height:34.95px"><span class="sy">44892.66667</span></div>
<div class="c" style="left:47px;top:674.05px;width:130px;line-height:34.95px"><span class="sy">63.5</span></div>
<div class="c" style="left:177px;top:674.05px;width:129px;line-height:34.95px"><span class="sy">44</span></div>
<div class="c" style="left:306px;top:674.05px;width:130px;line-height:34.95px"><span class="sy">46</span></div>
<div class="c" style="left:436px;top:674.05px;width:177.5px;line-height:34.95px"><span class="sy">5329</span></div>
<div class="c" style="left:613.5px;top:674.05px;width:179.5px;line-height:34.95px"><span class="sy">10847</span></div>
<div class="c" style="left:793px;top:674.05px;width:258px;line-height:34.95px"><span class="sy">44892.66667</span></div>
<div class="c" style="left:47px;top:709.00px;width:130px;line-height:34.95px"><span class="sy">63.5</span></div>
<div class="c" style="left:177px;top:709.00px;width:129px;line-height:34.95px"><span class="sy">44</span></div>
<div class="c" style="left:306px;top:709.00px;width:130px;line-height:34.95px"><span class="sy">46</span></div>
<div class="c" style="left:436px;top:709.00px;width:177.5px;line-height:34.95px"><span class="sy">5329</span></div>
<div class="c" style="left:613.5px;top:709.00px;width:179.5px;line-height:34.95px"><span class="sy">10847</span></div>
<div class="c" style="left:793px;top:709.00px;width:258px;line-height:34.95px"><span class="sy">44892.66667</span></div>
<div class="c" style="left:47px;top:743.95px;width:130px;line-height:34.95px"><span class="sy">63.5</span></div>
<div class="c" style="left:177px;top:743.95px;width:129px;line-height:34.95px"><span class="sy">44</span></div>
<div class="c" style="left:306px;top:743.95px;width:130px;line-height:34.95px"><span class="sy">46</span></div>
<div class="c" style="left:436px;top:743.95px;width:177.5px;line-height:34.95px"><span class="sy">5329</span></div>
<div class="c" style="left:613.5px;top:743.95px;width:179.5px;line-height:34.95px"><span class="sy">10847</span></div>
<div class="c" style="left:793px;top:743.95px;width:258px;line-height:34.95px"><span class="sy">44892.66667</span></div>
<div class="c" style="left:47px;top:778.90px;width:130px;line-height:34.95px"><span class="sy">63.5</span></div>
<div class="c" style="left:177px;top:778.90px;width:129px;line-height:34.95px"><span class="sy">44</span></div>
<div class="c" style="left:306px;top:778.90px;width:130px;line-height:34.95px"><span class="sy">46</span></div>
<div class="c" style="left:436px;top:778.90px;width:177.5px;line-height:34.95px"><span class="sy">5329</span></div>
<div class="c" style="left:613.5px;top:778.90px;width:179.5px;line-height:34.95px"><span class="sy">10847</span></div>
<div class="c" style="left:793px;top:778.90px;width:258px;line-height:34.95px"><span class="sy">44892.66667</span></div>
<div class="c" style="left:47px;top:813.85px;width:130px;line-height:34.95px"><span class="sy">63.5</span></div>
<div class="c" style="left:177px;top:813.85px;width:129px;line-height:34.95px"><span class="sy">44</span></div>
<div class="c" style="left:306px;top:813.85px;width:130px;line-height:34.95px"><span class="sy">46</span></div>
<div class="c" style="left:436px;top:813.85px;width:177.5px;line-height:34.95px"><span class="sy">5329</span></div>
<div class="c" style="left:613.5px;top:813.85px;width:179.5px;line-height:34.95px"><span class="sy">10847</span></div>
<div class="c" style="left:793px;top:813.85px;width:258px;line-height:34.95px"><span class="sy">44892.66667</span></div>
<div class="c" style="left:47px;top:848.80px;width:130px;line-height:34.95px"><span class="sy">63.5</span></div>
<div class="c" style="left:177px;top:848.80px;width:129px;line-height:34.95px"><span class="sy">44</span></div>
<div class="c" style="left:306px;top:848.80px;width:130px;line-height:34.95px"><span class="sy">46</span></div>
<div class="c" style="left:436px;top:848.80px;width:177.5px;line-height:34.95px"><span class="sy">5329</span></div>
<div class="c" style="left:613.5px;top:848.80px;width:179.5px;line-height:34.95px"><span class="sy">10847</span></div>
<div class="c" style="left:793px;top:848.80px;width:258px;line-height:34.95px"><span class="sy">44892.66667</span></div>
<div class="c" style="left:47px;top:883.75px;width:130px;line-height:34.95px"><span class="sy">63.5</span></div>
<div class="c" style="left:177px;top:883.75px;width:129px;line-height:34.95px"><span class="sy">44</span></div>
<div class="c" style="left:306px;top:883.75px;width:130px;line-height:34.95px"><span class="sy">46</span></div>
<div class="c" style="left:436px;top:883.75px;width:177.5px;line-height:34.95px"><span class="sy">5329</span></div>
<div class="c" style="left:613.5px;top:883.75px;width:179.5px;line-height:34.95px"><span class="sy">10847</span></div>
<div class="c" style="left:793px;top:883.75px;width:258px;line-height:34.95px"><span class="sy">44892.66667</span></div>
<div class="c" style="left:47px;top:918.70px;width:130px;line-height:34.95px"><span class="sy">63.5</span></div>
<div class="c" style="left:177px;top:918.70px;width:129px;line-height:34.95px"><span class="sy">44</span></div>
<div class="c" style="left:306px;top:918.70px;width:130px;line-height:34.95px"><span class="sy">46</span></div>
<div class="c" style="left:436px;top:918.70px;width:177.5px;line-height:34.95px"><span class="sy">5329</span></div>
<div class="c" style="left:613.5px;top:918.70px;width:179.5px;line-height:34.95px"><span class="sy">10847</span></div>
<div class="c" style="left:793px;top:918.70px;width:258px;line-height:34.95px"><span class="sy">44892.66667</span></div>
<div class="c" style="left:47px;top:953.65px;width:130px;line-height:34.95px"><span class="sy">63.5</span></div>
<div class="c" style="left:177px;top:953.65px;width:129px;line-height:34.95px"><span class="sy">44</span></div>
<div class="c" style="left:306px;top:953.65px;width:130px;line-height:34.95px"><span class="sy">46</span></div>
<div class="c" style="left:436px;top:953.65px;width:177.5px;line-height:34.95px"><span class="sy">5329</span></div>
<div class="c" style="left:613.5px;top:953.65px;width:179.5px;line-height:34.95px"><span class="sy">10847</span></div>
<div class="c" style="left:793px;top:953.65px;width:258px;line-height:34.95px"><span class="sy">44892.66667</span></div>
<div class="c" style="left:47px;top:988.60px;width:130px;line-height:34.95px"><span class="sy">63.5</span></div>
<div class="c" style="left:177px;top:988.60px;width:129px;line-height:34.95px"><span class="sy">44</span></div>
<div class="c" style="left:306px;top:988.60px;width:130px;line-height:34.95px"><span class="sy">46</span></div>
<div class="c" style="left:436px;top:988.60px;width:177.5px;line-height:34.95px"><span class="sy">5329</span></div>
<div class="c" style="left:613.5px;top:988.60px;width:179.5px;line-height:34.95px"><span class="sy">10847</span></div>
<div class="c" style="left:793px;top:988.60px;width:258px;line-height:34.95px"><span class="sy">44892.66667</span></div>
<div class="a" style="left:880px;top:0;width:142px;height:102.5px;border:6.3px solid #f20d12"></div>
<svg class="a" style="left:950px;top:105px" width="40" height="455"><path d="M20.4 7 L34 228 L28 228 L28 446 L26 450 L15 450 L13 446 L13 228 L6 228 Z" fill="#fa0f14"/></svg>
</body></html>
